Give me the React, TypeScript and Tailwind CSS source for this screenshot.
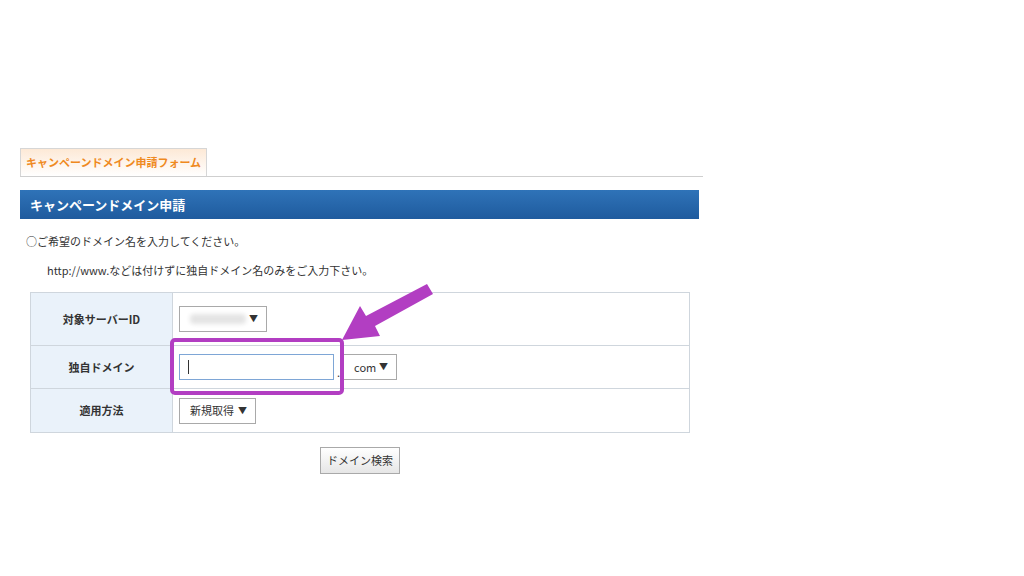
const jp = { fontFamily: '"Noto Sans CJK JP", "Liberation Sans", sans-serif' };

function Select({ label, w }: { label: React.ReactNode; w: string }) {
  return (
    <div className={`flex h-[26px] items-center justify-between border border-[#a9a9a9] bg-white pl-[10px] pr-[8px] text-[11px] text-[#333] ${w}`}>
      <span>{label}</span>
      <span className="text-[9px]">▼</span>
    </div>
  );
}

export default function App() {
  return (
    <div className="relative h-[576px] w-[1024px] overflow-hidden bg-white" style={jp}>
      <div className="pl-[20px] pt-[148px]">
        <div className="w-[683px] border-b border-[#cfcfcf]">
          <div className="flex h-[28px] w-[187px] items-center justify-center border border-b-0 border-[#d6d6d6] bg-gradient-to-b from-[#fde9d6] to-white text-[11px] font-bold text-[#ef8a1f]">
            キャンペーンドメイン申請フォーム
          </div>
        </div>
        <div className="mt-[13px] flex h-[29px] w-[679px] items-center bg-gradient-to-b from-[#2f73b8] to-[#1f5b9e] pl-[10px] text-[13px] font-bold text-white">
          キャンペーンドメイン申請
        </div>
        <div className="mt-[14px] pl-[6px] text-[11px] text-[#333]">○ご希望のドメイン名を入力してください。</div>
        <div className="mt-[12px] pl-[27px] text-[11px] text-[#333]">http://www.などは付けずに独自ドメイン名のみをご入力下さい。</div>
        <div className="ml-[10px] mt-[14px] w-[660px] border border-[#cfd6dd] text-[11px] text-[#333]">
          <div className="flex h-[53px] border-b border-[#cfd6dd]">
            <div className="flex w-[142px] items-center justify-center border-r border-[#cfd6dd] bg-[#eaf2fa] font-bold">対象サーバーID</div>
            <div className="flex items-center pl-[6px]">
              <Select w="w-[88px]" label={<span className="inline-block h-[10px] w-[56px] rounded bg-[#e4e4e4] blur-[2px]" />} />
            </div>
          </div>
          <div className="flex h-[43px] border-b border-[#cfd6dd]">
            <div className="flex w-[142px] items-center justify-center border-r border-[#cfd6dd] bg-[#eaf2fa] font-bold">独自ドメイン</div>
            <div className="flex items-center pl-[6px]">
              <div className="flex h-[26px] w-[155px] items-center border border-[#7ea6d6] pl-[8px]">
                <span className="h-[14px] w-px bg-[#333]" />
              </div>
              <span className="mx-[3px] self-end pb-[8px]">.</span>
              <Select w="w-[54px]" label="com" />
            </div>
          </div>
          <div className="flex h-[43px]">
            <div className="flex w-[142px] items-center justify-center border-r border-[#cfd6dd] bg-[#eaf2fa] font-bold">適用方法</div>
            <div className="flex items-center pl-[6px]">
              <Select w="w-[77px]" label="新規取得" />
            </div>
          </div>
        </div>
        <div className="ml-[300px] mt-[14px] flex h-[27px] w-[80px] items-center justify-center border border-[#a9a9a9] bg-gradient-to-b from-white to-[#e6e6e6] text-[11px] text-[#333]">
          ドメイン検索
        </div>
      </div>
      <div className="absolute left-[170px] top-[338px] h-[57px] w-[174px] rounded-[5px] border-[4px] border-[#b23ec2]" />
      <svg className="absolute left-0 top-0" width="1024" height="576">
        <polygon points="427,284 433,294 375,326 380,336 342,340 360,306 366,316" fill="#b23ec2" />
      </svg>
    </div>
  );
}
